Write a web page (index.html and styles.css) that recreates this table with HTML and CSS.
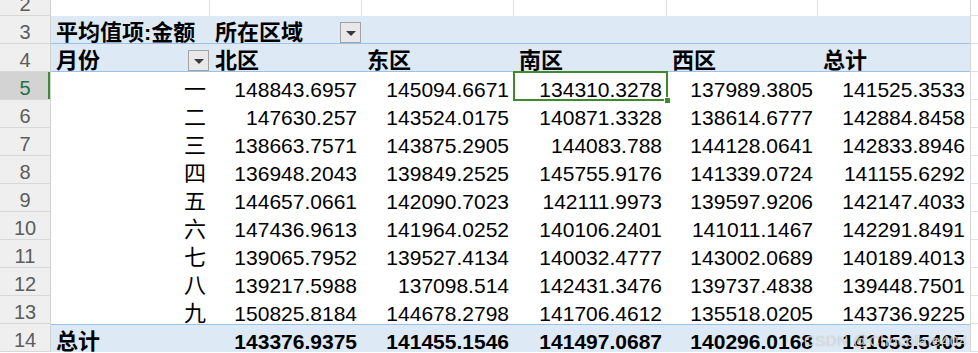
FILE: index.html
```html
<!DOCTYPE html>
<html lang="zh-CN">
<head>
<meta charset="utf-8">
<title>数据透视表</title>
<link rel="stylesheet" href="styles.css">
</head>
<body>
<div class="sheet">
  <div class="row top">
    <div class="rh">2</div>
    <div class="cell ca gl"></div><div class="cell cb gl"></div><div class="cell cc gl"></div><div class="cell cd gl"></div><div class="cell ce gl"></div><div class="cell cf gl"></div><div class="cell cg"></div>
  </div>
  <div class="row head">
    <div class="rh">3</div>
    <div class="cell ca b zh">平均值项:金额</div>
    <div class="cell cb b split zh"><span>所在区域</span><span class="dd"></span></div>
    <div class="cell cc"></div><div class="cell cd"></div><div class="cell ce"></div><div class="cell cf"></div><div class="cell cg"></div>
  </div>
  <div class="row head">
    <div class="rh">4</div>
    <div class="cell ca b split zh"><span>月份</span><span class="dd dd2"></span></div>
    <div class="cell cb b zh">北区</div>
    <div class="cell cc b zh">东区</div>
    <div class="cell cd b zh">南区</div>
    <div class="cell ce b zh">西区</div>
    <div class="cell cf b zh">总计</div>
    <div class="cell cg"></div>
  </div>
  <div class="row body">
    <div class="rh active">5</div>
    <div class="cell ca r zh">一</div><div class="cell cb r">148843.6957</div><div class="cell cc r">145094.6671</div><div class="cell cd r sel">134310.3278</div><div class="cell ce r">137989.3805</div><div class="cell cf r">141525.3533</div><div class="cell cg"></div>
  </div>
  <div class="row body">
    <div class="rh">6</div>
    <div class="cell ca r zh">二</div><div class="cell cb r">147630.257</div><div class="cell cc r">143524.0175</div><div class="cell cd r">140871.3328</div><div class="cell ce r">138614.6777</div><div class="cell cf r">142884.8458</div><div class="cell cg"></div>
  </div>
  <div class="row body">
    <div class="rh">7</div>
    <div class="cell ca r zh">三</div><div class="cell cb r">138663.7571</div><div class="cell cc r">143875.2905</div><div class="cell cd r">144083.788</div><div class="cell ce r">144128.0641</div><div class="cell cf r">142833.8946</div><div class="cell cg"></div>
  </div>
  <div class="row body">
    <div class="rh">8</div>
    <div class="cell ca r zh">四</div><div class="cell cb r">136948.2043</div><div class="cell cc r">139849.2525</div><div class="cell cd r">145755.9176</div><div class="cell ce r">141339.0724</div><div class="cell cf r">141155.6292</div><div class="cell cg"></div>
  </div>
  <div class="row body">
    <div class="rh">9</div>
    <div class="cell ca r zh">五</div><div class="cell cb r">144657.0661</div><div class="cell cc r">142090.7023</div><div class="cell cd r">142111.9973</div><div class="cell ce r">139597.9206</div><div class="cell cf r">142147.4033</div><div class="cell cg"></div>
  </div>
  <div class="row body">
    <div class="rh">10</div>
    <div class="cell ca r zh">六</div><div class="cell cb r">147436.9613</div><div class="cell cc r">141964.0252</div><div class="cell cd r">140106.2401</div><div class="cell ce r">141011.1467</div><div class="cell cf r">142291.8491</div><div class="cell cg"></div>
  </div>
  <div class="row body">
    <div class="rh">11</div>
    <div class="cell ca r zh">七</div><div class="cell cb r">139065.7952</div><div class="cell cc r">139527.4134</div><div class="cell cd r">140032.4777</div><div class="cell ce r">143002.0689</div><div class="cell cf r">140189.4013</div><div class="cell cg"></div>
  </div>
  <div class="row body">
    <div class="rh">12</div>
    <div class="cell ca r zh">八</div><div class="cell cb r">139217.5988</div><div class="cell cc r">137098.514</div><div class="cell cd r">142431.3476</div><div class="cell ce r">139737.4838</div><div class="cell cf r">139448.7501</div><div class="cell cg"></div>
  </div>
  <div class="row body last">
    <div class="rh">13</div>
    <div class="cell ca r zh">九</div><div class="cell cb r">150825.8184</div><div class="cell cc r">144678.2798</div><div class="cell cd r">141706.4612</div><div class="cell ce r">135518.0205</div><div class="cell cf r">143736.9225</div><div class="cell cg"></div>
  </div>
  <div class="row total">
    <div class="rh">14</div>
    <div class="cell ca b zh">总计</div><div class="cell cb r b">143376.9375</div><div class="cell cc r b">141455.1546</div><div class="cell cd r b">141497.0687</div><div class="cell ce r b">140296.0168</div><div class="cell cf r b">141653.5405<span class="wm">CSDN @Chocolate404</span></div><div class="cell cg"></div>
  </div>
</div>
</body>
</html>
```
FILE: styles.css
```css
html, body {
  margin: 0;
  padding: 0;
  background: #ffffff;
  overflow: hidden;
}
.sheet {
  width: 978px;
  height: 353px;
  display: flex;
  flex-direction: column;
  font-family: "Liberation Sans", "Noto Sans CJK SC", sans-serif;
  font-size: 21px;
  color: #000;
}
.row {
  display: flex;
  height: 28px;
  flex: 0 0 auto;
}
.row.top { height: 16px; }
.rh {
  width: 51px;
  flex: 0 0 51px;
  box-sizing: border-box;
  background: #efefef;
  border-right: 1px solid #d0d0d0;
  border-bottom: 1px solid #d8d8d8;
  color: #5c5c5c;
  font-size: 20px;
  display: flex;
  align-items: flex-end;
  justify-content: center;
  line-height: 21px;
  overflow: hidden;
}
.rh.active {
  background: #d3d3d3;
  color: #217346;
  box-shadow: inset -2px 0 0 #3f8a2e;
}
.cell {
  box-sizing: border-box;
  display: flex;
  align-items: flex-end;
  line-height: 21px;
  padding: 0 5px 0 5px;
  white-space: nowrap;
  overflow: visible;
  position: relative;
}
.zh { font-size: 22px; }
.ca { width: 159px; flex: 0 0 159px; }
.cb { width: 152px; flex: 0 0 152px; }
.cc { width: 152px; flex: 0 0 152px; }
.cd { width: 153px; flex: 0 0 153px; }
.ce { width: 151px; flex: 0 0 151px; }
.cf { width: 152px; flex: 0 0 152px; }
.cg {
  flex: 1 1 auto;
  border-left: 1px solid #d6d6d6;
  border-bottom: 1px solid #e1e1e1;
}
.top .cell { overflow: hidden; }
.gl {
  border-right: 1px solid #e1e1e1;
}
.top .cf { border-right: none; }
.head .cell:not(.cg), .total .cell:not(.cg) {
  background: #dde9f5;
}
.head .cell:not(.cg) {
  border-bottom: 1px solid #9bc2e6;
}
.total .cell:not(.cg) {
  border-top: 1px solid #9bc2e6;
}
.b { font-weight: bold; }
.r { justify-content: flex-end; padding-right: 4px; }
.cb.r, .cc.r, .cd.r, .ce.r, .cf.r { padding-right: 5px; }
.split {
  justify-content: space-between;
  padding-right: 1px;
}
.dd {
  width: 21px;
  height: 21px;
  box-sizing: border-box;
  border: 1px solid #a3a3a3;
  background: #e8e8e8;
  display: flex;
  align-items: center;
  justify-content: center;
}
.dd::after {
  content: "";
  width: 0;
  height: 0;
  border-left: 5px solid transparent;
  border-right: 5px solid transparent;
  border-top: 5px solid #3a3a3a;
  margin-top: 1px;
}
.sel::after {
  content: "";
  position: absolute;
  left: -1px;
  top: -1px;
  right: -1px;
  bottom: -1px;
  border: 2px solid #3f8a2e;
  pointer-events: none;
}
.sel::before {
  content: "";
  position: absolute;
  right: -4px;
  bottom: -4px;
  width: 5px;
  height: 5px;
  background: #3f8a2e;
  border: 1px solid #ffffff;
  z-index: 2;
}
.wm {
  position: absolute;
  left: -14px;
  bottom: 4px;
  font-size: 15px;
  font-weight: normal;
  line-height: 15px;
  color: rgba(235, 235, 235, 0.75);
  letter-spacing: 0.5px;
  text-shadow: 0 0 1px rgba(120, 120, 120, 0.5);
}
```
